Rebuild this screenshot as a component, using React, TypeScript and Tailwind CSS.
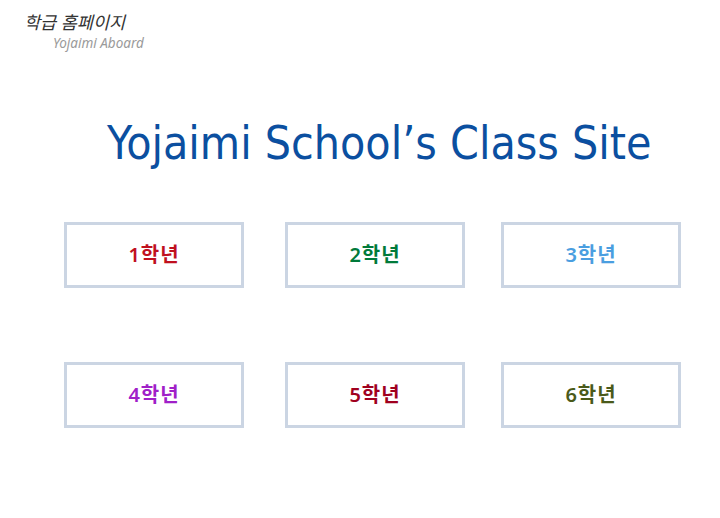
import React from 'react';

const grades = [
  { label: '1학년', color: 'text-[#c0101e]' },
  { label: '2학년', color: 'text-[#007a3a]' },
  { label: '3학년', color: 'text-[#4a9ee0]' },
  { label: '4학년', color: 'text-[#a020c8]' },
  { label: '5학년', color: 'text-[#a0001e]' },
  { label: '6학년', color: 'text-[#4a5a1a]' },
];

const GradeBox = ({ label, color, className }: { label: string; color: string; className?: string }) => (
  <a
    href="#"
    className={`flex h-[66px] w-[180px] shrink-0 items-center justify-center border-[3px] border-[#cbd5e3] bg-white text-[20px] font-semibold tracking-[1px] ${color} ${className ?? ''}`}
  >
    {label}
  </a>
);

export default function App() {
  const rows = [grades.slice(0, 3), grades.slice(3)];

  return (
    <div
      className="h-[518px] w-[720px] bg-white"
      style={{ fontFamily: '"Noto Sans", "Noto Sans CJK KR", sans-serif' }}
    >
      {/* 로고 */}
      <div className="pl-[24px] pt-[10px]">
        <div className="text-[17.5px] italic leading-[24px] text-[#333]">학급 홈페이지</div>
        <div className="pl-[29px] text-[13.5px] italic leading-[18px] text-[#9a9a9a]">Yojaimi Aboard</div>
      </div>

      <h1
        className="mt-[64px] pl-[107px] text-[46px] leading-[54px] text-[#0b4fa0]"
        style={{ fontFamily: '"DejaVu Sans Condensed", "DejaVu Sans", sans-serif' }}
      >
        Yojaimi School’s Class Site
      </h1>

      <div className="mt-[52px] flex flex-col gap-[74px] pl-[64px]">
        {rows.map((row, i) => (
          <div key={i} className="flex">
            <GradeBox {...row[0]} />
            <GradeBox {...row[1]} className="ml-[41px]" />
            <GradeBox {...row[2]} className="ml-[36px]" />
          </div>
        ))}
      </div>
    </div>
  );
}
